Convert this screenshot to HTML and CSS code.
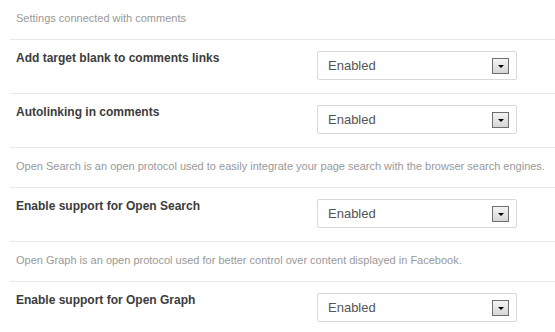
FILE: index.html
```html
<!DOCTYPE html>
<html lang="en">
<head>
<meta charset="UTF-8">
<title>Settings</title>
<link rel="stylesheet" href="styles.css">
</head>
<body>

<div class="settings">
    <p class="note">Settings connected with comments</p>

    <div class="row">
        <label class="row-label">Add target blank to comments links</label>
        <div class="select"><span class="select-value">Enabled</span><span class="select-btn"><span class="select-arrow"></span></span></div>
    </div>

    <div class="row">
        <label class="row-label">Autolinking in comments</label>
        <div class="select"><span class="select-value">Enabled</span><span class="select-btn"><span class="select-arrow"></span></span></div>
    </div>

    <p class="note">Open Search is an open protocol used to easily integrate your page search with the browser search engines.</p>

    <div class="row">
        <label class="row-label">Enable support for Open Search</label>
        <div class="select"><span class="select-value">Enabled</span><span class="select-btn"><span class="select-arrow"></span></span></div>
    </div>

    <p class="note">Open Graph is an open protocol used for better control over content displayed in Facebook.</p>

    <div class="row">
        <label class="row-label">Enable support for Open Graph</label>
        <div class="select"><span class="select-value">Enabled</span><span class="select-btn"><span class="select-arrow"></span></span></div>
    </div>
</div>

</body>
</html>
```

FILE: styles.css
```css
body {
    margin: 0;
    padding: 0;
    background: #fff;
    font-family: "Liberation Sans", Arial, sans-serif;
}
.settings {
    padding-left: 10px;
}
.note {
    margin: 0;
    padding: 12px 6px 14px;
    font-size: 11px;
    line-height: 13px;
    color: #999;
    border-bottom: 1px solid #e8e8e8;
    white-space: nowrap;
}
.row {
    display: flex;
    align-items: flex-start;
    padding: 11px 6px 13px;
    border-bottom: 1px solid #e8e8e8;
}
.row-label {
    width: 301px;
    flex-shrink: 0;
    font-size: 12px;
    font-weight: bold;
    line-height: 14px;
    color: #3c3c3c;
}
.select {
    box-sizing: border-box;
    width: 200px;
    height: 29px;
    display: flex;
    align-items: center;
    justify-content: space-between;
    padding: 0 7px 0 10px;
    border: 1px solid #d9d9d9;
    border-radius: 2px;
    font-size: 13px;
    color: #555;
}
.select-btn {
    box-sizing: border-box;
    width: 17px;
    height: 16px;
    display: flex;
    align-items: center;
    justify-content: center;
    border: 1px solid #6e6e6e;
    background: linear-gradient(#f4f4f4, #d6d6d6);
}
.select-arrow {
    width: 0;
    height: 0;
    margin-top: 2px;
    border-left: 3px solid transparent;
    border-right: 3px solid transparent;
    border-top: 3px solid #000;
}
```
